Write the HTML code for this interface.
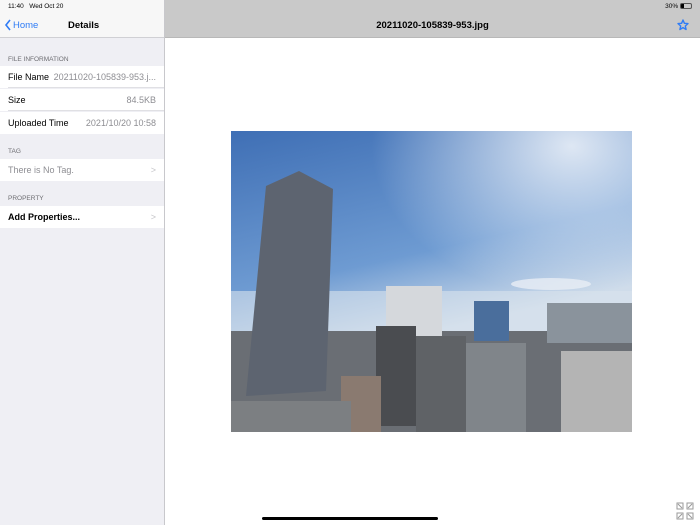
<!DOCTYPE html>
<html><head><style>
*{margin:0;padding:0;box-sizing:border-box}
body{width:700px;height:525px;overflow:hidden;font-family:"Liberation Sans",sans-serif;background:#fff;position:relative}
.side{position:absolute;left:0;top:0;width:165px;height:525px;background:#efeff4;border-right:1px solid #c8c8cc}
.sh{position:absolute;left:0;top:0;width:164px;height:38px;background:#f7f7f7;border-bottom:1px solid #d0d0d4}
.t{position:absolute;font-size:7px;color:#000}
.lab{position:absolute;left:8px;font-size:6.5px;color:#6d6d72}
.row{position:absolute;left:0;width:164px;height:22px;background:#fff;font-size:9px;line-height:22px;padding-left:8px}
.row .v{position:absolute;right:8px;top:0;color:#8e8e93}
.sep{position:absolute;left:8px;right:0;bottom:0;height:1px;background:#e0e0e4}
.main{position:absolute;left:165px;top:0;right:0;height:38px;background:#c9c9c9;border-bottom:1px solid #b8b8b8}
</style></head><body>
<div class="side">
<div class="sh">
<div class="t" style="left:8px;top:3px;font-size:6.5px">11:40&nbsp;&nbsp; Wed Oct 20</div>
<svg style="position:absolute;left:4px;top:19px" width="8" height="12"><path d="M6 1L2 6L6 11" stroke="#2f7cf6" stroke-width="1.6" fill="none"/></svg>
<div style="position:absolute;left:13px;top:20px;font-size:9.5px;color:#2f7cf6">Home</div>
<div style="position:absolute;left:68px;top:20px;font-size:9.5px;font-weight:bold">Details</div>
</div>
<div class="lab" style="top:56px">FILE INFORMATION</div>
<div class="row" style="top:66px">File Name<span class="v">20211020-105839-953.j...</span><div class="sep"></div></div>
<div class="row" style="top:89px">Size<span class="v">84.5KB</span><div class="sep"></div></div>
<div class="row" style="top:112px">Uploaded Time<span class="v">2021/10/20 10:58</span></div>
<div class="lab" style="top:148px">TAG</div>
<div class="row" style="top:159px;color:#8e8e93">There is No Tag.<span class="v" style="color:#c4c4c8">&gt;</span></div>
<div class="lab" style="top:195px">PROPERTY</div>
<div class="row" style="top:206px;font-weight:bold">Add Properties...<span class="v" style="color:#c4c4c8;font-weight:normal">&gt;</span></div>
</div>
<div class="main">
<div style="position:absolute;right:8px;top:3px;font-size:6.5px">30% <span style="display:inline-block;width:12px;height:6px;border:1px solid #555;border-radius:2px;vertical-align:middle;background:linear-gradient(90deg,#000 30%,transparent 30%)"></span></div>
<div style="position:absolute;left:0;right:0;top:20px;text-align:center;font-size:9.5px;font-weight:bold">20211020-105839-953.jpg</div>
<svg style="position:absolute;right:11px;top:19px" width="12" height="12" viewBox="0 0 12 12"><path d="M6 1L7.4 4.3L11 4.6L8.3 7L9.1 10.5L6 8.6L2.9 10.5L3.7 7L1 4.6L4.6 4.3Z" fill="none" stroke="#2f7cf6" stroke-width="1.4" stroke-linejoin="round"/></svg>
</div>
<svg style="position:absolute;left:231px;top:131px" width="401" height="301" viewBox="0 0 401 301">
<defs><linearGradient id="sky" x1="0" y1="0" x2="0.3" y2="1"><stop offset="0" stop-color="#3f6fb5"/><stop offset="0.5" stop-color="#6e9bd2"/><stop offset="0.75" stop-color="#cfdcea"/></linearGradient>
<radialGradient id="sun" cx="0.85" cy="0.05" r="0.5"><stop offset="0" stop-color="#fff" stop-opacity="0.8"/><stop offset="1" stop-color="#fff" stop-opacity="0"/></radialGradient></defs>
<rect width="401" height="301" fill="url(#sky)"/>
<rect width="401" height="301" fill="url(#sun)"/>
<ellipse cx="320" cy="153" rx="40" ry="6" fill="#e8eef5" opacity="0.8"/>
<rect x="0" y="160" width="401" height="50" fill="#d8e2ec" opacity="0.6"/>
<rect x="0" y="200" width="401" height="101" fill="#6a6e74"/>
<polygon points="35,55 68,40 102,58 95,260 15,265" fill="#5d6470"/>
<rect x="155" y="155" width="56" height="60" fill="#d5d8dc"/>
<rect x="243" y="170" width="35" height="40" fill="#4a6e9c"/>
<rect x="316" y="172" width="85" height="40" fill="#8a939c"/>
<rect x="145" y="195" width="40" height="100" fill="#4a4c50"/>
<rect x="185" y="205" width="50" height="96" fill="#5f6266"/>
<rect x="235" y="212" width="60" height="89" fill="#80858a"/>
<rect x="330" y="220" width="71" height="81" fill="#b4b4b4"/>
<rect x="110" y="245" width="40" height="56" fill="#8a7a70"/>
<rect x="0" y="270" width="120" height="31" fill="#7c7f82"/>
</svg>
<svg style="position:absolute;left:676px;top:502px" width="18" height="18" viewBox="0 0 18 18" fill="none" stroke="#9a9a9a" stroke-width="1"><path d="M1 1h6v6H1zM11 1h6v6h-6zM1 11h6v6H1zM11 11h6v6h-6zM2 2l4 4M16 2l-4 4M2 16l4-4M16 16l-4-4"/></svg>
<div style="position:absolute;left:262px;top:517px;width:176px;height:3px;border-radius:2px;background:#000"></div>
</body></html>
